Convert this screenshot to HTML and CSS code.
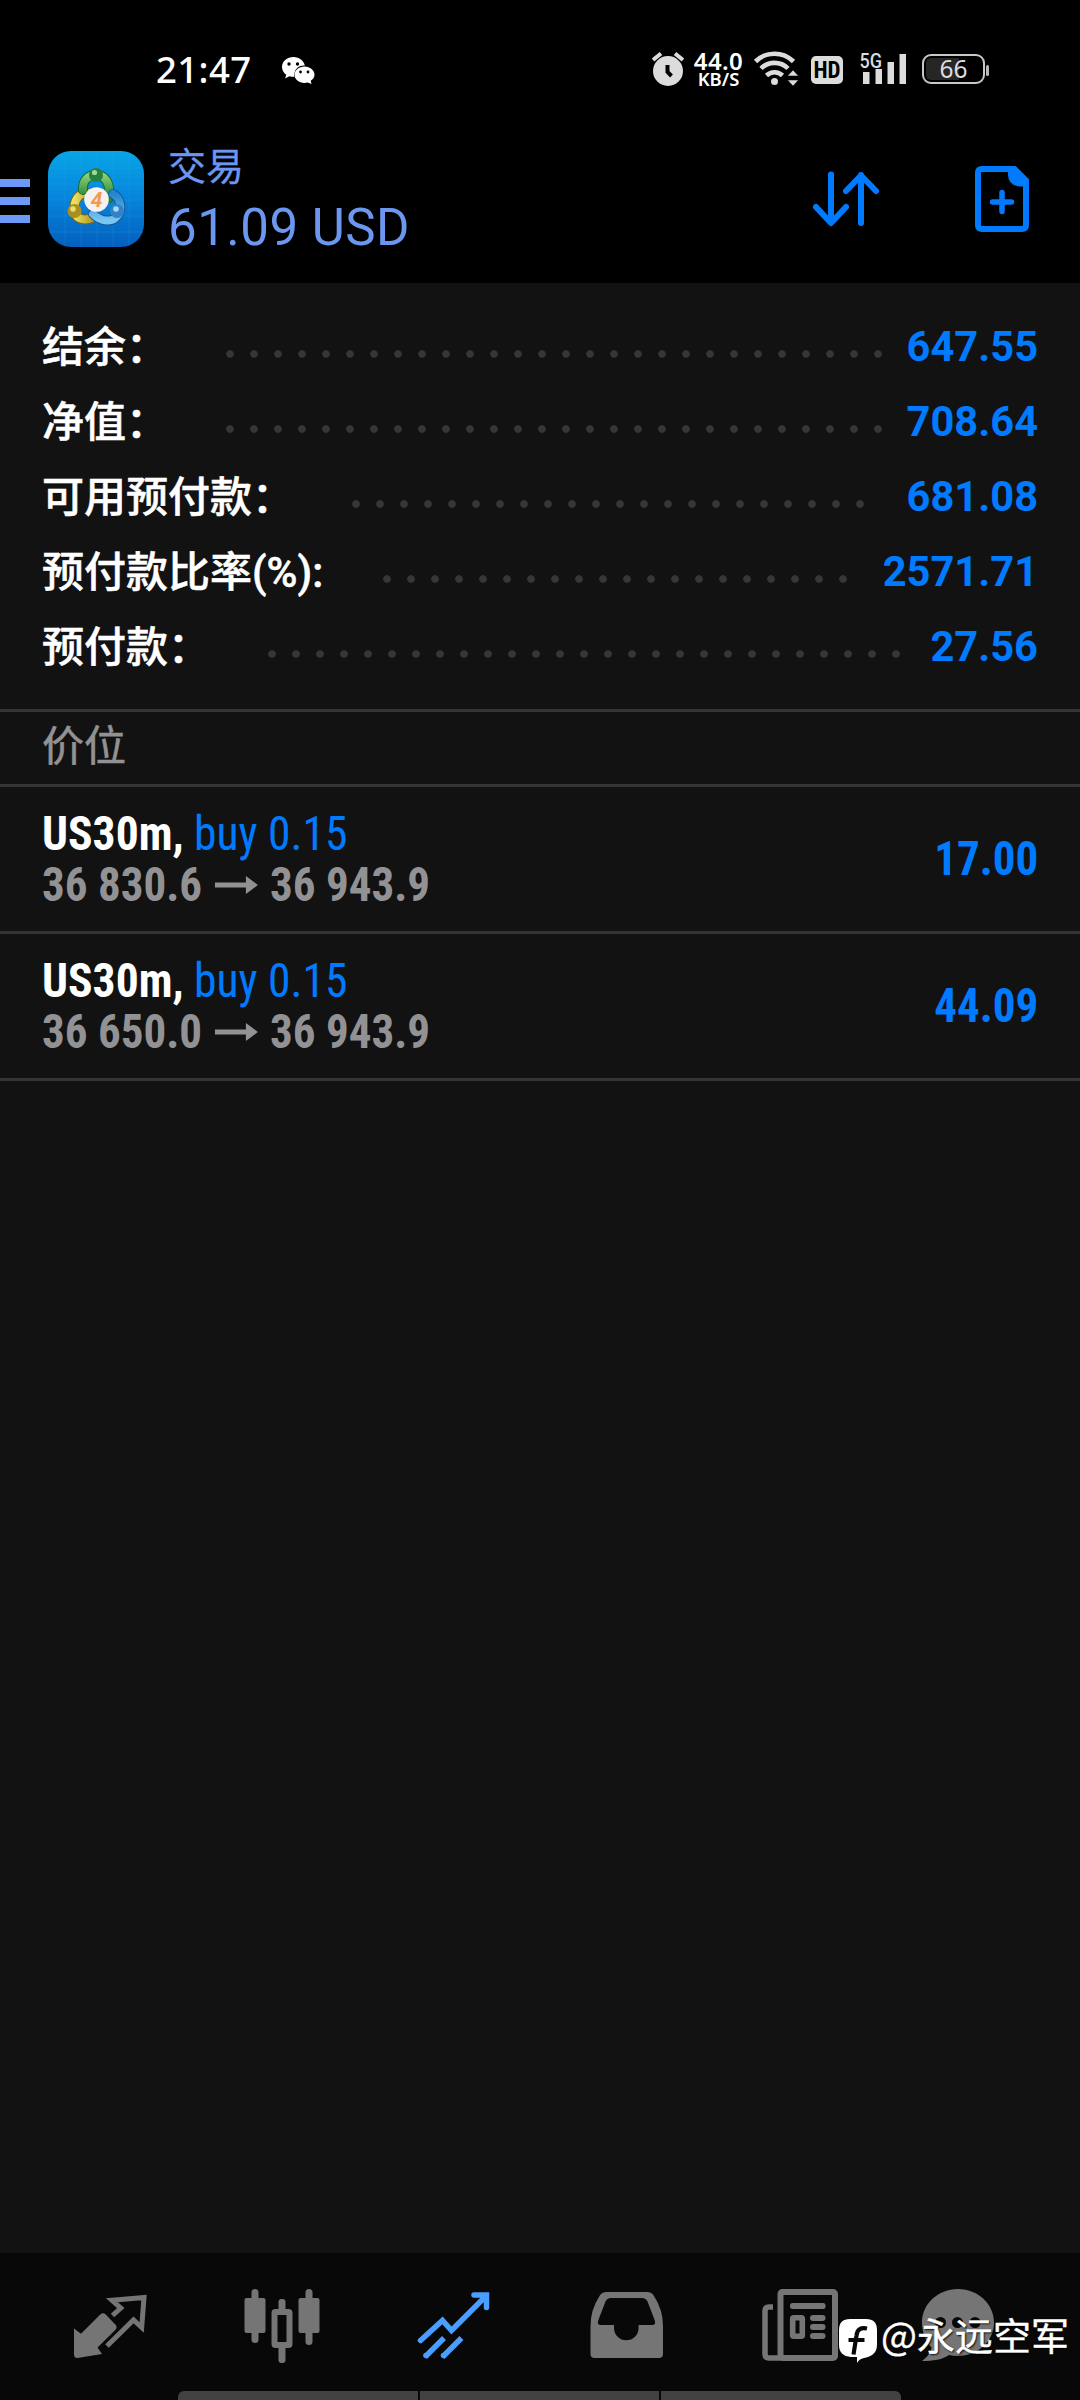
FILE: index.html
```html
<!DOCTYPE html>
<html lang="zh-CN">
<head>
<meta charset="utf-8">
<title>交易</title>
<link rel="stylesheet" href="styles.css">
</head>
<body>
<div class="screen">
  <div class="statusbar">
    <span class="clock">21:47</span>
    <svg class="wechat" viewBox="282 56 33 28">
      <path fill="#fff" d="M293.500 57c-6.500 0-11.500 4.400-11.500 10 0 3.200 1.600 5.900 4.200 7.700l-1.100 3.700 4.200-2.200c1.300.4 2.700.6 4.200.6h.8a9.500 9.500 0 0 1 10.500-11.200c-.9-5-5.500-8.600-11.300-8.600z"/>
      <path fill="#fff" d="M304.500 66.500c-5.600 0-10 3.700-10 8.200s4.400 8.200 10 8.200c1.100 0 2.200-.2 3.200-.4l3.800 1.500-.8-3.200c2.300-1.500 3.800-3.700 3.800-6.100 0-4.500-4.400-8.200-10-8.200z"/>
      <circle cx="289" cy="64" r="1.700"/><circle cx="297.500" cy="64" r="1.700"/><circle cx="300.500" cy="72" r="1.400"/><circle cx="308" cy="72" r="1.400"/>
    </svg>
    <svg class="alarm" viewBox="652 51 32 36">
      <circle cx="668" cy="71" r="15" fill="#dcdcdc"/>
      <path d="M667.500 65v7l4 4" fill="none" stroke="#000" stroke-width="4"/>
      <path d="M653 60l8-6.500M683 60l-8-6.500" stroke="#dcdcdc" stroke-width="4"/>
    </svg>
    <span class="speed"><b>44.0</b><i>KB/S</i></span>
    <svg class="wifi" viewBox="753 50 46 38">
      <g fill="none" stroke="#dcdcdc" stroke-width="4.600">
        <path d="M755.500 61.500a27 27 0 0 1 38 0M761 68.500a19 19 0 0 1 27 0M766.500 75.500a11.500 11.500 0 0 1 16 0"/>
      </g>
      <circle cx="774.500" cy="81.500" r="3.500" fill="#dcdcdc"/>
      <path d="M793 70l5.500 6h-11zM793 86l5.500-6h-11z" fill="#dcdcdc" stroke="#000" stroke-width=".5"/>
    </svg>
    <span class="hd">HD</span>
    <svg class="signal" viewBox="859 50 48 36">
      <path d="M863 72h6.500v12H863zM875.500 69h6.500v15h-6.500zM887.500 62h6.500v22h-6.500zM899.500 54h6.500v30h-6.500z" fill="#dcdcdc"/>
      <text x="859.500" y="67.500" textLength="22.500" lengthAdjust="spacingAndGlyphs">5G</text>
    </svg>
    <span class="battery">66</span><span class="battery-tip"></span>
  </div>

  <div class="header">
    <div class="menu"><span></span><span></span><span></span></div>
    <svg class="logo" viewBox="0 0 96 96">
      <defs>
        <linearGradient id="sky" x2="0" y2="1"><stop offset="0" stop-color="#08a5e6"/><stop offset=".5" stop-color="#0684dc"/><stop offset="1" stop-color="#045fbd"/></linearGradient>
        <linearGradient id="green" x2="0" y2="1"><stop offset="0" stop-color="#8bcf74"/><stop offset="1" stop-color="#1f8439"/></linearGradient>
        <linearGradient id="gold"><stop offset="0" stop-color="#e9df62"/><stop offset="1" stop-color="#b39a1c"/></linearGradient>
        <linearGradient id="blue" x2="0" y2="1"><stop offset="0" stop-color="#2584ce"/><stop offset="1" stop-color="#79c6f2"/></linearGradient>
      </defs>
      <rect width="96" height="96" rx="23" fill="url(#sky)"/>
      <path d="M17 1v94M33 0v96M49 0v96M65 0v96M81 1v94M1 17h94M0 33h96M0 49h96M0 65h96M1 81h94" stroke="#39b2ec" stroke-opacity=".18"/>
      <g fill="none" stroke-width="8" stroke-linecap="round">
        <path d="M27 61c1 7 9 9 17 6M27 59c-2-9 4-17 12-17" stroke="#77651a" stroke-width="10"/>
        <path d="M27 61c1 7 9 9 17 6M27 59c-2-9 4-17 12-17" stroke="url(#gold)"/>
        <path d="M35 39c-1-10 6-15 13-15 9 0 15 8 13 23" stroke="#176a34" stroke-width="10"/>
        <path d="M35 39c-1-10 6-15 13-15 9 0 15 8 13 23" stroke="url(#green)"/>
        <path d="M65 43c8 4 9 15 5 21-5 8-17 7-25-1" stroke="#15589b" stroke-width="10"/>
        <path d="M65 43c8 4 9 15 5 21-5 8-17 7-25-1" stroke="url(#blue)"/>
      </g>
      <circle cx="48" cy="24" r="7" fill="#27803f"/><circle cx="46.500" cy="21.500" r="2.600" fill="#a4d693"/>
      <circle cx="26.500" cy="60" r="7" fill="#a98f20"/><circle cx="25" cy="58" r="2.800" fill="#eadc70"/>
      <circle cx="69" cy="60" r="7" fill="#3182c6"/><circle cx="68" cy="58" r="2.800" fill="#a3dcf8"/>
      <circle cx="48.500" cy="48.500" r="12.300" fill="#f4f1ef"/>
      <text class="four" x="48.500" y="56" text-anchor="middle">4</text>
    </svg>
    <div class="title"><span class="page">交易</span><span class="total">61.09 USD</span></div>
    <svg class="sort" viewBox="812 170 68 58"><path d="M831 174.500v48M816 207l15 16 15-16M861 223v-48M846 191l15-15.500 15 15.500"/></svg>
    <svg class="add" viewBox="974 165 56 68">
      <path d="M982 169h32.500l11.500 11.500v44.500q0 4-4 4h-40q-4 0-4-4v-52q0-4 4-4z" fill="none" stroke="#007aff" stroke-width="6"/>
      <path d="M1008 168h8l12 12v6.500h-8q-12-1-12-12z" fill="#007aff"/>
      <path d="M1002 192.500v19M992.500 202h19" stroke="#007aff" stroke-width="5.500" stroke-linecap="round"/>
    </svg>
  </div>

  <div class="summary">
    <div class="row"><span class="label">结余：</span><span class="dots d1"></span><span class="value">647.55</span></div>
    <div class="row"><span class="label">净值：</span><span class="dots d1"></span><span class="value">708.64</span></div>
    <div class="row"><span class="label">可用预付款：</span><span class="dots d2"></span><span class="value">681.08</span></div>
    <div class="row"><span class="label ratio">预付款比率(%):</span><span class="dots d3"></span><span class="value">2571.71</span></div>
    <div class="row"><span class="label">预付款：</span><span class="dots d4"></span><span class="value">27.56</span></div>
  </div>
  <div class="section">价位</div>
  <div class="position">
    <div class="deal">
      <div class="symbol"><b>US30m,</b> <span>buy 0.15</span></div>
      <div class="prices"><span>36 830.6</span><svg class="arrow" viewBox="0 0 43 18" preserveAspectRatio="none"><path d="M0 6.500h31V0l12 9-12 9v-6.500H0z"/></svg><span>36 943.9</span></div>
    </div>
    <div class="profit">17.00</div>
  </div>
  <div class="position">
    <div class="deal">
      <div class="symbol"><b>US30m,</b> <span>buy 0.15</span></div>
      <div class="prices"><span>36 650.0</span><svg class="arrow" viewBox="0 0 43 18" preserveAspectRatio="none"><path d="M0 6.500h31V0l12 9-12 9v-6.500H0z"/></svg><span>36 943.9</span></div>
    </div>
    <div class="profit">44.09</div>
  </div>

  <div class="nav">
    <div class="tabs">
      <svg viewBox="65 2285 90 80">
        <path class="fill" d="M74 2328.500l7 5.200 19.500-19.500q2.500-2 5 0l10.500 11q1.500 2 0 4l-18.500 18.300 4.500 6.500-24.500 4q-3.500 0-3.500-3.500z"/>
        <path class="line" stroke-width="5" d="M112.500 2315.500l8.300-7.500-8.800-7.700 32-2.800-2.300 30-8.200-7.500-26.500 26"/>
      </svg>
      <svg viewBox="237.500 2285 90 80">
        <rect class="fill" x="244" y="2298" width="21" height="35" rx="2"/><rect class="fill" x="251" y="2289" width="7" height="54" rx="3.500"/>
        <rect class="line" x="274" y="2312" width="15" height="33" rx="1" stroke-width="6"/><rect class="fill" x="278" y="2299" width="7" height="13" rx="3"/><rect class="fill" x="278" y="2345" width="7" height="18" rx="3"/>
        <rect class="fill" x="298" y="2298" width="21" height="35" rx="2"/><rect class="fill" x="305" y="2289" width="7" height="56" rx="3.500"/>
      </svg>
      <svg class="active" viewBox="410 2285 90 80">
        <path class="line" stroke-width="5.500" stroke-linecap="round" d="M420.500 2340.500l22-20 9 10 34-34M474 2295h12.500v12.500"/>
        <path class="line" stroke-width="5.500" d="M425 2357l19-19M442.500 2357l19-19"/><circle class="fill" cx="426" cy="2355.500" r="2.750"/><circle class="fill" cx="443.500" cy="2355.500" r="2.750"/>
      </svg>
      <svg viewBox="583 2285 90 80">
        <path class="fill" fill-rule="evenodd" d="M607 2292h40q5 0 7 4 9 14 9 30v28q0 4-4 4h-64.500q-4 0-4-4v-28q0-16 9-30 2-4 7.500-4zM611 2298q-4 0-5.500 3.500l-7.300 19q-1.500 4.500 3 4.500h12.800v3a12.300 12.300 0 0 0 24.600 0v-3h13.500q4 0 2.700-4.500l-7.300-19q-1.500-3.500-5.500-3.500z"/>
      </svg>
      <svg viewBox="755 2285 90 80">
        <rect class="line" x="780.500" y="2292" width="54.500" height="66" rx="2" stroke-width="6"/>
        <path class="line" stroke-width="5.500" d="M773 2307h-4q-4 0-4 4v43q0 4 4 4h12"/>
        <g class="fill"><rect x="790" y="2303" width="35.500" height="6" rx="2.500"/><rect x="810" y="2315" width="15.500" height="6" rx="3"/><rect x="810" y="2324" width="15.500" height="6" rx="3"/><rect x="810" y="2333" width="15.500" height="6" rx="3"/></g>
        <rect class="line" x="792.700" y="2317.700" width="9.600" height="18.600" rx="1" stroke-width="5.600"/>
      </svg>
      <svg viewBox="913 2285 90 80">
        <path class="fill" d="M958 2289c20 0 36 15 36 33.500s-16 33.500-36 33.500c-3 0-6-.4-9-1-6 4.500-16 6-27 6 5-3.500 9-9 9.500-13.500-6-6-9.500-15.500-9.500-25 0-18.500 16-33.500 36-33.500z"/>
        <circle cx="940.500" cy="2322.500" r="5.500" fill="#080808"/><circle cx="957.500" cy="2322.500" r="5.500" fill="#080808"/><circle cx="975" cy="2322.500" r="5.500" fill="#080808"/>
      </svg>
    </div>
    <div class="handle"><span></span><span></span><span></span></div>
  </div>
  <div class="watermark">
    <svg viewBox="0 0 38 44"><path fill="#fff" d="M11 0h16q11 0 11 11v15c0 9-7 12-13 13q-5 1-7 5v-6h-6Q0 37 0 26V11Q0 0 11 0z"/><path d="M28 9.500q-9.500-2-10.500 7l-3 19M9.500 21h16" fill="none" stroke="#080808" stroke-width="4.200"/></svg>
    <span>@永远空军</span>
  </div>
</div>
</body>
</html>
```
FILE: styles.css
```css
* { box-sizing: border-box; }
body { margin: 0; background: #000; }
.screen {
  position: relative; display: flex; flex-direction: column;
  width: 1080px; height: 2400px; overflow: hidden;
  background: #121212; color: #fff;
  font-family: Roboto, "Noto Sans CJK SC", sans-serif;
}
svg { display: block; flex: none; }

.statusbar { display: flex; align-items: center; height: 140px; padding-left: 156px; background: #000; color: #dcdcdc; }
.clock { width: 126px; margin-top: -2px; font: 500 36.5px/40px "Noto Sans", sans-serif; letter-spacing: .4px; color: #fff; }
.wechat { width: 33px; height: 28px; }
.alarm { width: 32px; height: 36px; margin-left: 337px; margin-top: -2px; }
.speed { display: flex; flex-direction: column; align-items: center; width: 51px; margin-left: 9px; font-family: "Noto Sans", sans-serif; color: #fff; }
.speed b { font-size: 24px; line-height: 19px; font-weight: 600; letter-spacing: .4px; margin-top: -3px; }
.speed i { font-style: normal; font-size: 18.5px; line-height: 17px; font-weight: 600; }
.wifi { width: 46px; height: 38px; margin-left: 9px; margin-top: -2px; }
.hd { width: 32px; height: 28px; margin-left: 12px; border-radius: 5px; background: #dcdcdc; color: #000; font: 700 23px/29px "Roboto Condensed", Roboto, sans-serif; font-stretch: 75%; text-align: center; }
.signal { width: 48px; height: 36px; margin: -4px 0 0 16px; fill: #dcdcdc; font: 500 21px Roboto, sans-serif; }
.battery { width: 63px; height: 30px; margin-left: 15px; margin-top: -2px; padding: 2px; border: 2.5px solid #c8c8c8; border-radius: 9px; background: linear-gradient(90deg, #262626 60%, #000 60%) content-box; font: 400 24.5px/21px "Noto Sans", sans-serif; text-align: center; }
.battery-tip { width: 3px; height: 11px; margin-left: 1px; border-radius: 2px; background: #b8b8b8; }

.header { display: flex; height: 143px; background: #000; }
.menu { display: flex; flex-direction: column; gap: 10px; width: 30px; margin: 39px 18px 0 0; }
.menu span { height: 8px; background: #6c98f8; }
.logo { width: 96px; height: 96px; margin-top: 11px; }
.four { font: italic 700 21px Roboto, sans-serif; fill: #f19a50; }
.title { display: flex; flex: none; flex-direction: column; width: 668px; padding-left: 24px; color: #6c97f0; }
.page { height: 54px; font-size: 38px; line-height: 54px; -webkit-text-stroke: .3px; }
.total { font-size: 51px; line-height: 67px; letter-spacing: .5px; }
.sort { width: 68px; height: 58px; margin-top: 30px; fill: none; stroke: #007aff; stroke-width: 6; stroke-linecap: round; stroke-linejoin: round; }
.add { width: 56px; height: 68px; margin: 25px 0 0 94px; }

.summary { height: 429px; padding: 27px 42px 0; border-bottom: 3px solid #343434; }
.row { display: flex; align-items: center; height: 75px; }
.label { font: 500 42px/75px Roboto, "Noto Sans CJK SC", sans-serif; white-space: nowrap; -webkit-text-stroke: .5px #fff; }
.ratio { width: 283px; }
.dots { height: 8px; margin: 13px 0 0 50px; background: radial-gradient(circle at 12px 4px, #363636 3.4px, transparent 4.2px) 0 0 / 24px 8px repeat-x; }
.d1 { width: 672px; }
.d2 { width: 528px; }
.d3 { width: 480px; }
.d4 { width: 648px; }
.value { margin: -2px 0 0 auto; color: #007aff; font-weight: 700; font-size: 41.6px; }

.section { height: 75px; padding-left: 42px; border-bottom: 3px solid #343434; color: #929295; font-size: 42px; line-height: 69px; -webkit-text-stroke: .6px; }
.position { display: flex; justify-content: space-between; height: 147px; padding: 21px 42px 0; border-bottom: 3px solid #343434; font-family: "Roboto Condensed", Roboto, sans-serif; font-stretch: 75%; font-size: 49px; }
.symbol { height: 51px; line-height: 51px; white-space: nowrap; transform: scaleX(.93); transform-origin: left; }
.symbol span, .profit { color: #007aff; }
.prices { display: flex; align-items: center; height: 51px; color: #929295; font-weight: 700; transform: scaleX(.919); transform-origin: left; }
.arrow { width: 47px; height: 18px; margin: 0 13px 0 14px; fill: #929295; }
.profit { padding-top: 25px; line-height: 52px; font-weight: 700; transform: scaleX(.919); transform-origin: right; }

.nav { height: 147px; margin-top: auto; padding-top: 32px; background: #080808; }
.tabs { display: flex; gap: 82.5px; padding-left: 65px; }
.tabs svg { width: 90px; height: 80px; color: #757575; }
.tabs svg:last-child { margin-left: -14.5px; }
.tabs .active { color: #4a9eff; }
.fill { fill: currentColor; }
.line { fill: none; stroke: currentColor; }
.handle { display: flex; gap: 2px; width: 723px; height: 9px; margin: 26px 0 0 178px; border-radius: 6px 6px 0 0; overflow: hidden; }
.handle span { flex: 1; background: #424242; }

.watermark { position: absolute; right: 11px; bottom: 37px; display: flex; gap: 4px; align-items: center; font: 400 38px/44px "Noto Sans CJK SC", sans-serif; text-shadow: 1px 1px 2px #000; }
.watermark svg { width: 38px; height: 44px; }
.watermark span { margin-top: -14px; -webkit-text-stroke: .4px #fff; }
```
